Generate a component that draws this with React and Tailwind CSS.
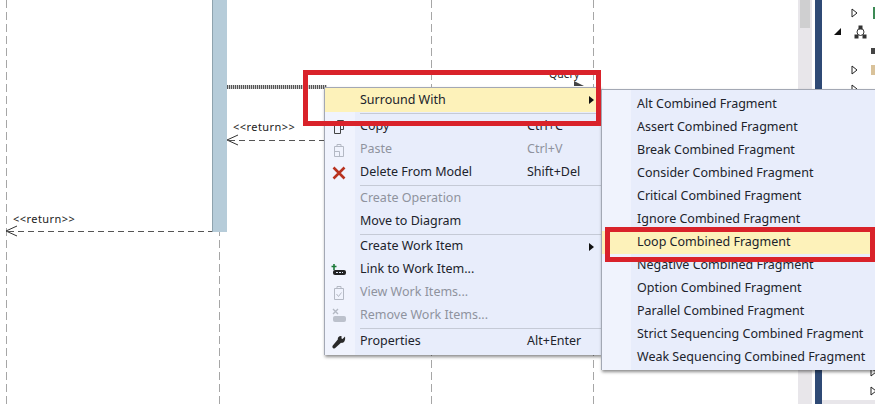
import React from "react";

const font = { fontFamily: '"Noto Sans", "Open Sans", sans-serif' };

function Arrow({ className }) {
  return <svg className={className} width="14" height="12" viewBox="0 0 14 12"><path d="M13 1 2 6l11 5" fill="none" stroke="#333" strokeWidth="1" /></svg>;
}

function Caret() {
  return <svg width="5" height="8" viewBox="0 0 5 8"><path d="M0 0l5 4-5 4z" fill="#111" /></svg>;
}

function CopyIcon() {
  return <svg width="16" height="16" viewBox="0 0 16 16" fill="none" stroke="#444"><path d="M6.5 4.5v-3h6v9h-3" /><path d="M3.500 5.500h6v9h-6z" /></svg>;
}
function PasteIcon() {
  return <svg width="16" height="16" viewBox="0 0 16 16" fill="none" stroke="#b4b9c4"><path d="M3.500 4.500h9v10h-9z" /><path d="M6 4.500v-2h4v2" /><path d="M3.500 9.500h5v5" /></svg>;
}
function DeleteIcon() {
  return <svg width="16" height="16" viewBox="0 0 16 16"><path d="M2.500 2.500l11 11M13.500 2.500l-11 11" stroke="#b8321f" strokeWidth="2.600" /></svg>;
}
function LinkIcon() {
  return <svg width="16" height="14" viewBox="0 0 16 14"><path d="M3 1v6M0.500 3.500h5" stroke="#1d7a3a" strokeWidth="1.600" /><rect x="2" y="7" width="13" height="5" rx="2" fill="#222" /><path d="M5 9.500h7" stroke="#dfe6f5" strokeWidth="1" strokeDasharray="2 1" /></svg>;
}
function ViewIcon() {
  return <svg width="14" height="16" viewBox="0 0 14 16" fill="none" stroke="#b4b9c4"><path d="M2.500 3.500h9v11h-9z" /><path d="M5 3.500v-2h4v2" /><path d="M4.500 9l2 2.500 3-4" /></svg>;
}
function RemoveIcon() {
  return <svg width="16" height="15" viewBox="0 0 16 15"><path d="M2 1l5 5M7 1L2 6" stroke="#b4b9c4" strokeWidth="1.400" /><rect x="2" y="8" width="13" height="6" rx="2" fill="#bcc1cc" /></svg>;
}
function WrenchIcon() {
  return <svg width="14" height="14" viewBox="0 0 14 14"><path d="M13 1.500 10.500 4 9.500 3.500 9.500 1 C7.500 0.500 5.500 2 5.800 4.500 L0.800 10.500 C0 11.500 0.500 13 1.200 13.200 2.200 13.800 3 13.300 3.500 12.800 L9 7.800 C11.500 8.500 13.800 6 13 1.500Z" fill="#2a2a2a" /></svg>;
}

function Row({ label, shortcut, icon, disabled, sub, active, h = "h-[23px]" }) {
  return (
    <div className={`flex items-center ${h} ${active ? "bg-[#fdf2ba]" : ""}`}>
      <div className="w-[28px] mr-[7px] flex justify-center items-center shrink-0">{icon}</div>
      <div className={`flex-1 text-[12.500px] whitespace-nowrap ${disabled ? "text-[#8f939e]" : "text-[#20232b]"}`}>{label}</div>
      {shortcut && <div className={`w-[74px] text-[12.500px] whitespace-nowrap ${disabled ? "text-[#8f939e]" : "text-[#20232b]"}`}>{shortcut}</div>}
      {sub && <div className="w-[12px] flex items-center"><Caret /></div>}
    </div>
  );
}

function Sep({ tight }) {
  return <div className={`ml-[35px] h-px bg-[#c5cad6] ${tight ? "my-[0.5px]" : "my-[1px]"}`} />;
}

const subItems = [
  "Alt Combined Fragment",
  "Assert Combined Fragment",
  "Break Combined Fragment",
  "Consider Combined Fragment",
  "Critical Combined Fragment",
  "Ignore Combined Fragment",
  "Loop Combined Fragment",
  "Negative Combined Fragment",
  "Option Combined Fragment",
  "Parallel Combined Fragment",
  "Strict Sequencing Combined Fragment",
  "Weak Sequencing Combined Fragment",
];

function Hollow() {
  return <svg width="7" height="10" viewBox="0 0 7 10"><path d="M1 1l5 4-5 4z" fill="#fff" stroke="#222" /></svg>;
}

const lifeline = "absolute top-0 w-px h-full bg-[repeating-linear-gradient(to_bottom,#a6a6a6_0,#a6a6a6_8px,transparent_8px,transparent_12px)]";
const dashed = "absolute h-px bg-[repeating-linear-gradient(to_right,#555_0,#555_6px,transparent_6px,transparent_10px)]";

export default function App() {
  return (
    <div className="relative w-[875px] h-[404px] overflow-hidden bg-white flex" style={font}>
      {/* diagram canvas */}
      <div className="relative w-[798px] h-full shrink-0">
        <div className={`${lifeline} left-[6px]`} />
        <div className={`${lifeline} left-[219px]`} />
        <div className={`${lifeline} left-[431px]`} />
        <div className={`${lifeline} left-[593px]`} />
        <div className="absolute left-[212px] top-0 w-[15px] h-[232px] bg-[#b6ccd9] border-l border-[#8fa3ae]" />
        <div className="absolute left-[227px] top-[85px] w-[100px] h-[4px] bg-[repeating-linear-gradient(to_right,#555_0,#555_1px,#ccc_1px,#ccc_2px)]" />
        <div className="absolute left-[549px] top-[67px] text-[10.500px] text-[#222]">Query</div>
        <svg className="absolute left-[574px] top-[81px]" width="12" height="7" viewBox="0 0 12 7"><path d="M0 0l10 5-10 0z" fill="#444" /></svg>
        <div className="absolute left-[233px] top-[119px] text-[11px] tracking-[0.45px] text-[#222]">&lt;&lt;return&gt;&gt;</div>
        <div className={`${dashed} left-[229px] top-[140px] w-[96px]`} />
        <Arrow className="absolute left-[225px] top-[134px]" />
        <div className="absolute left-[13px] top-[211px] text-[11px] tracking-[0.45px] text-[#222]">&lt;&lt;return&gt;&gt;</div>
        <div className={`${dashed} left-[8px] top-[231px] w-[204px]`} />
        <Arrow className="absolute left-[4px] top-[225px]" />
      </div>

      {/* scrollbar */}
      <div className="w-[14px] h-full bg-[#e8e6ea] px-[2px] shrink-0">
        <div className="h-[28px] bg-[#cfcfd0]" />
      </div>
      <div className="w-[3px] shrink-0" />
      <div className="w-[7px] h-full bg-[#2f4a75] shrink-0" />

      {/* tree */}
      <div className="flex-1 h-full flex flex-col justify-between pt-[3px] text-[0px]">
        <div className="flex flex-col">
          <div className="h-[19px] flex items-center pl-[29px] gap-[15px]">
            <Hollow />
            <div className="w-[2px] h-[12px] bg-[#3c8a55]" />
          </div>
          <div className="h-[19px] flex items-center pl-[12px] gap-[11px]">
            <svg width="8" height="8" viewBox="0 0 8 8"><path d="M7 0v7H0z" fill="#111" /></svg>
            <svg width="15" height="16" viewBox="0 0 15 16" fill="none" stroke="#333"><circle cx="7.500" cy="8" r="3.500" /><rect x="6" y="2" width="3" height="3" fill="#333" /><rect x="2" y="11" width="3" height="3" fill="#333" /><rect x="10" y="11" width="3" height="3" fill="#333" /></svg>
            <div className="ml-[5px] w-[2px] h-[10px] bg-[#c98a4a]" />
          </div>
          <div className="h-[19px] flex items-center pl-[49px]">
            <div className="w-[4px] h-[6px] bg-[#444]" />
          </div>
          <div className="h-[19px] flex items-center pl-[29px] gap-[13px]">
            <Hollow />
            <div className="w-[4px] h-[10px] bg-[#d9c29a]" />
          </div>
          <div className="h-[19px] flex items-center pl-[29px]">
            <Hollow />
          </div>
        </div>
        <div className="flex flex-col">
          <div className="h-[19px] flex items-center pl-[48px]"><Hollow /></div>
          <div className="h-[19px] flex items-center pl-[48px]"><Hollow /></div>
          <div className="h-[4px] bg-[#e8e6ea]" />
        </div>
      </div>

      {/* context menu */}
      <div className="absolute left-[324px] top-[87px] w-[277px] h-[268px] bg-[#e8edfb] border-l border-t border-[#a3a8b4] shadow-[1px_2px_3px_rgba(0,0,0,0.45)]">
        <div className="absolute left-0 top-0 bottom-0 w-[30px] bg-[#f0f3fd]" />
        <div className="relative">
          <Row label="Surround With" active sub h="h-[24px]" />
          <Sep />
          <Row label="Copy" shortcut="Ctrl+C" icon={<CopyIcon />} />
          <Row label="Paste" shortcut="Ctrl+V" disabled icon={<PasteIcon />} />
          <Row label="Delete From Model" shortcut="Shift+Del" icon={<DeleteIcon />} />
          <Sep />
          <Row label="Create Operation" disabled />
          <Row label="Move to Diagram" />
          <Sep tight />
          <Row label="Create Work Item" sub />
          <Row label="Link to Work Item..." icon={<LinkIcon />} />
          <Row label="View Work Items..." disabled icon={<ViewIcon />} />
          <Row label="Remove Work Items..." disabled icon={<RemoveIcon />} />
          <Sep />
          <Row label="Properties" shortcut="Alt+Enter" icon={<WrenchIcon />} />
        </div>
      </div>

      {/* submenu */}
      <div className="absolute left-[601px] top-[89px] w-[274px] h-[281px] pt-[3px] bg-[#e8edfb] border-l border-t border-[#a3a8b4] shadow-[1px_2px_3px_rgba(0,0,0,0.45)]">
        <div className="absolute left-0 top-0 bottom-0 w-[29px] bg-[#f0f3fd]" />
        <div className="relative">
          {subItems.map((s, i) => (
            <Row key={s} label={s} active={i === 6} />
          ))}
        </div>
      </div>

      {/* red annotation boxes */}
      <div className="absolute left-[303px] top-[70px] w-[298px] h-[56px] border-[5px] border-[#d9222a]" />
      <div className="absolute left-[605px] top-[227px] w-[270px] h-[35px] border-[5px] border-[#d9222a]" />
    </div>
  );
}
